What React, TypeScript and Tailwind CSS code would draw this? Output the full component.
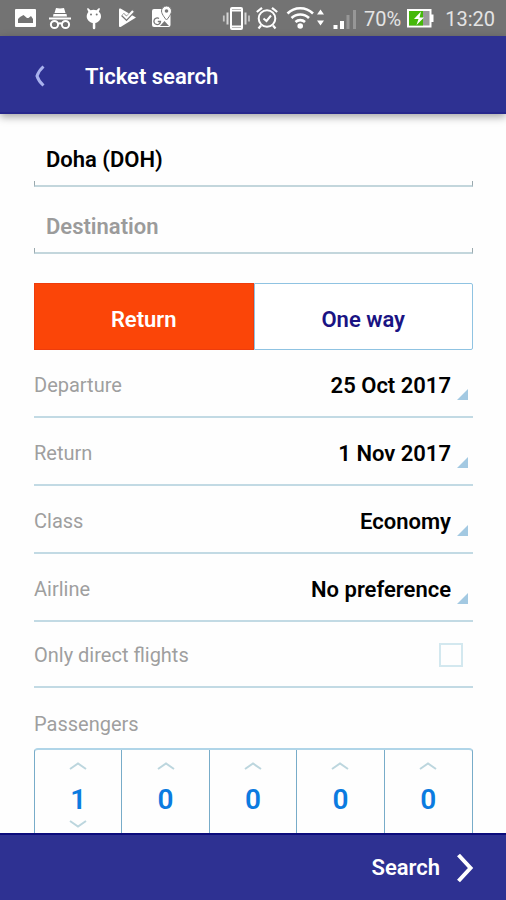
import { useState } from 'react'

// ---------------------------------------------------------------------------
// Status bar icons
// ---------------------------------------------------------------------------

function NotificationIcons() {
  return (
    <div className="flex items-center gap-3" aria-hidden="true">
      {/* Picture */}
      <svg width="22" height="24" viewBox="0 0 22 24">
        <path
          fill="#fff"
          fillRule="evenodd"
          d="M1 3h19a1 1 0 0 1 1 1v16a1 1 0 0 1-1 1H1a1 1 0 0 1-1-1V4a1 1 0 0 1 1-1Zm2 14h15v-4l-2-3-2.500 2-1.500 0-3.500-3L5 11l-2 2Z"
        />
      </svg>
      {/* Incognito */}
      <svg width="22" height="24" viewBox="0 0 22 24">
        <path fill="#fff" d="M7 2 11 2.500l4-.5L16.500 7h-11ZM4.500 8h13l.5 2.500H4Z" />
        <path fill="#fff" d="M0 11.500h22v2H0Z" />
        <g fill="none" stroke="#fff" strokeWidth="2">
          <circle cx="5.500" cy="18.500" r="3.600" />
          <circle cx="16.500" cy="18.500" r="3.600" />
          <path d="M9 18q2-1.500 4 0" />
        </g>
      </svg>
      {/* Android head */}
      <svg width="22" height="24" viewBox="0 0 22 24">
        <path
          fill="#fff"
          d="M5 2l2.500 2.300a8 8 0 0 1 6 0L16 2l1 .8-1.200 3C17.300 7 18 8.500 18 10.500c0 3.300-2.800 6-5.700 6.500V22a1.200 1.200 0 0 1-2.500 0v-5C6.500 16.500 3.700 13.800 3.700 10.500 3.700 8.500 4.500 7 5.400 6L4 2.800Z"
        />
        <circle cx="8" cy="8.500" r="1" fill="#777" />
        <circle cx="13.700" cy="8.500" r="1" fill="#777" />
      </svg>
      {/* Play with tick */}
      <svg width="22" height="24" viewBox="0 0 22 24">
        <path fill="#fff" d="M2 3.500Q2 2 3.500 2.600L19 11.500 4 20.700Q2 21.500 2 20Z" />
        <path d="m5.500 8.500 4 4 8-8.500" fill="none" stroke="#777" strokeWidth="4" />
        <path d="m6 8.500 3.500 3.500 6.500-7" fill="none" stroke="#fff" strokeWidth="2.200" />
      </svg>
      {/* Map with pin */}
      <svg width="22" height="24" viewBox="0 0 22 24">
        <rect x="1" y="3" width="18.500" height="18" rx="2" fill="#fff" />
        <path d="m9 20 4.500-5 4.500 5Z" fill="#777" />
        <path d="M8 12.500a3.300 3.300 0 1 0 1.500 3H6.800" fill="none" stroke="#777" strokeWidth="1.300" />
        <path
          d="M15.500 0a5 5 0 0 1 5 5c0 3.500-5 9-5 9s-5-5.500-5-9a5 5 0 0 1 5-5Z"
          fill="#fff"
          stroke="#777"
        />
        <circle cx="15.500" cy="5" r="1.800" fill="#777" />
      </svg>
    </div>
  )
}

function VibrateIcon() {
  return (
    <svg width="28" height="24" viewBox="0 0 28 24" aria-hidden="true">
      <rect x="9" y="2" width="11" height="21" rx="1" fill="none" stroke="#fff" strokeWidth="2" />
      <path d="M9 4.500h11M9 20.500h11" stroke="#fff" strokeWidth="2" />
      <path d="M5.500 6.500v12M23.500 6.500v12" stroke="#d6d6d6" strokeWidth="2" />
      <path d="M1.800 9.500v6M27 9.500v6" stroke="#c4c4c4" strokeWidth="1.800" />
    </svg>
  )
}

function AlarmIcon() {
  return (
    <svg width="22" height="24" viewBox="0 0 22 24" aria-hidden="true" fill="none" stroke="#fff">
      <circle cx="11" cy="12.500" r="8.300" strokeWidth="2" />
      <path d="m7.500 12.500 3 2.500 4.500-5.500" strokeWidth="2" />
      <path d="M.8 6 6 1.800M16 1.800 21.200 6M5 19.500l-2.500 3M17 19.500l2.500 3" strokeWidth="2.200" />
    </svg>
  )
}

function WifiIcon() {
  return (
    <svg width="42" height="24" viewBox="0 0 42 24" aria-hidden="true">
      <g fill="none" stroke="#fff" strokeWidth="2.600">
        <path d="M3.500 7.500a18 18 0 0 1 25.500 0" />
        <path d="M7.500 12a12.500 12.500 0 0 1 17.500 0" />
        <path d="M11.500 16a7 7 0 0 1 9.500 0" />
      </g>
      <circle cx="16.200" cy="20" r="2.800" fill="#fff" />
      <path fill="#fff" d="M36.500 3.500 40 8.500h-7ZM33 14.500h7l-3.500 5Z" />
    </svg>
  )
}

function SignalIcon() {
  return (
    <svg width="26" height="24" viewBox="0 0 26 24" aria-hidden="true">
      <rect x="1.500" y="19" width="4" height="4" fill="#fff" />
      <rect x="8" y="15" width="4" height="8" fill="#fff" />
      <rect x="14.500" y="9" width="3" height="14" fill="#979797" />
      <rect x="21" y="4" width="3" height="19" fill="#979797" />
    </svg>
  )
}

function BatteryIcon() {
  return (
    <svg width="28" height="24" viewBox="0 0 28 24" aria-hidden="true">
      <rect x="1" y="4" width="22.500" height="16.500" fill="#9a9a9a" stroke="#fff" strokeWidth="2" />
      <rect x="24" y="8.500" width="2.500" height="7.500" fill="#fff" />
      <rect x="2" y="5" width="14" height="14.500" fill="#45b80a" />
      <path d="M14 5.500 7 13h4.500l-2 6 7.500-7.500h-4.500Z" fill="#fff" />
    </svg>
  )
}

function StatusBar() {
  return (
    <div className="flex h-9 shrink-0 items-center justify-between bg-[#737373] pl-[15px] pr-[11px] text-xl text-[#e4e4e4]">
      <NotificationIcons />
      <div className="flex items-center gap-1.5">
        <VibrateIcon />
        <AlarmIcon />
        <WifiIcon />
        <SignalIcon />
        <span className="pt-0.5">70%</span>
        <BatteryIcon />
        <span className="ml-1 pt-0.5">13:20</span>
      </div>
    </div>
  )
}

// ---------------------------------------------------------------------------
// Form fields
// ---------------------------------------------------------------------------

interface AirportFieldProps {
  label: string
  defaultValue?: string
}

function AirportField({ label, defaultValue }: AirportFieldProps) {
  return (
    <div className="flex h-[67px] flex-col justify-end">
      <input
        type="text"
        aria-label={label}
        placeholder={label}
        defaultValue={defaultValue}
        className="h-11 w-full bg-transparent px-3 text-[22px] font-semibold text-black outline-none placeholder:text-[#9b9b9b]"
      />
      <div className="h-1.5 border-x border-b-2 border-x-[#9aa9ae] border-b-[#c3d6dc]" />
    </div>
  )
}

interface SelectRowProps {
  id: string
  label: string
  options: string[]
}

function SelectRow({ id, label, options }: SelectRowProps) {
  return (
    <div className="flex h-[68px] items-center border-b-2 border-[#c2dae4] pr-[5px] pt-1">
      <label htmlFor={id} className="text-xl text-[#9f9f9f]">
        {label}
      </label>
      <select
        id={id}
        className="min-w-0 flex-1 appearance-none bg-transparent text-right text-[22px] font-semibold text-black outline-none [text-align-last:right]"
      >
        {options.map((option) => (
          <option key={option}>{option}</option>
        ))}
      </select>
      <svg width="11" height="11" viewBox="0 0 11 11" className="mb-4 ml-1.5 self-end" aria-hidden="true">
        <path d="M11 0v11H0Z" fill="#a3c9e2" />
      </svg>
    </div>
  )
}

const ROWS: SelectRowProps[] = [
  { id: 'departure', label: 'Departure', options: ['25 Oct 2017'] },
  { id: 'return', label: 'Return', options: ['1 Nov 2017'] },
  { id: 'class', label: 'Class', options: ['Economy'] },
  { id: 'airline', label: 'Airline', options: ['No preference'] },
]

// ---------------------------------------------------------------------------
// Passenger counters
// ---------------------------------------------------------------------------

const PASSENGER_TYPES = ['Adults', 'Youths', 'Children', 'Infants', 'Seniors']

interface CounterProps {
  label: string
  value: number
  onChange: (value: number) => void
}

function Counter({ label, value, onChange }: CounterProps) {
  return (
    <div className="flex flex-col items-center" role="group" aria-label={label}>
      <button
        type="button"
        aria-label={`More ${label}`}
        onClick={() => onChange(value + 1)}
        className="flex h-8 w-full items-center justify-center"
      >
        <svg width="18" height="8" viewBox="0 0 18 8" fill="none" stroke="#bcd6de" strokeWidth="2">
          <path d="m1 7 8-5.500L17 7" />
        </svg>
      </button>
      <output className="h-9 text-[28px] leading-9 font-semibold text-[#0b7be0]">{value}</output>
      {value > 0 && (
        <button
          type="button"
          aria-label={`Fewer ${label}`}
          onClick={() => onChange(value - 1)}
          className="flex h-3 w-full items-center justify-center"
        >
          <svg width="18" height="8" viewBox="0 0 18 8" fill="none" stroke="#bcd6de" strokeWidth="2">
            <path d="m1 1 8 5.500L17 1" />
          </svg>
        </button>
      )}
    </div>
  )
}

// ---------------------------------------------------------------------------
// Page
// ---------------------------------------------------------------------------

export default function App() {
  const [trip, setTrip] = useState<'return' | 'oneway'>('return')
  const [counts, setCounts] = useState([1, 0, 0, 0, 0])

  const active = 'border-[#ee3c0c] bg-[#fb4508] text-white'
  const inactive = 'border-[#8fc3e2] bg-white text-[#1a1383]'

  return (
    <div className="flex h-screen flex-col bg-[#fefefe] font-[Roboto,sans-serif]">
      <StatusBar />

      <header className="z-10 flex h-[78px] shrink-0 items-center border-b-2 border-[#27278c] bg-[#2e3192] pt-1 pl-[34px] shadow-[0_3px_8px_rgba(0,0,0,0.35)]">
        <button type="button" aria-label="Back" className="mr-10">
          <svg width="11" height="22" viewBox="0 0 11 22" fill="none" stroke="#a9b2ee" strokeWidth="3">
            <path d="M9.500 1.500Q4.500 6 3 11q1.500 5 6.500 9.500" />
          </svg>
        </button>
        <h1 className="text-[22px] font-semibold text-white">Ticket search</h1>
      </header>

      <main className="min-h-0 flex-1 overflow-y-auto pt-1.5 pr-[33px] pl-[34px] [scrollbar-width:none]">
        <AirportField label="Origin" defaultValue="Doha (DOH)" />
        <AirportField label="Destination" />

        <div className="mt-[29px] grid h-[67px] grid-cols-2 text-[22px] font-semibold">
          <button
            type="button"
            aria-pressed={trip === 'return'}
            onClick={() => setTrip('return')}
            className={`border pt-1.5 ${trip === 'return' ? active : inactive}`}
          >
            Return
          </button>
          <button
            type="button"
            aria-pressed={trip === 'oneway'}
            onClick={() => setTrip('oneway')}
            className={`rounded-r-xs border pt-1.5 ${trip === 'oneway' ? active : inactive}`}
          >
            One way
          </button>
        </div>

        {ROWS.map((row) => (
          <SelectRow key={row.id} {...row} />
        ))}

        <div className="flex h-[66px] items-center justify-between border-b-2 border-[#c2dae4] pr-2.5 pt-0.5">
          <label htmlFor="direct" className="text-xl text-[#9f9f9f]">
            Only direct flights
          </label>
          <input
            id="direct"
            type="checkbox"
            className="size-6 appearance-none border-2 border-[#d3e8ef] checked:bg-[#a3c9e2]"
          />
        </div>

        <h2 className="mt-6 mb-3 text-xl leading-6 text-[#9f9f9f]">Passengers</h2>
        <div className="grid h-28 grid-cols-5 divide-x divide-[#78acc9] rounded-sm border border-t-2 border-[#78acc9] border-t-[#b0d5e8]">
          {PASSENGER_TYPES.map((label, i) => (
            <Counter
              key={label}
              label={label}
              value={counts[i]}
              onChange={(value) => setCounts(counts.map((c, j) => (j === i ? value : c)))}
            />
          ))}
        </div>
      </main>

      <footer className="flex h-[67px] shrink-0 items-center justify-end border-t-2 border-[#0c0c7c] bg-[#2e3192] pr-8">
        <button type="button" className="flex items-center gap-4 text-[22px] font-semibold text-white">
          Search
          <svg width="18" height="30" viewBox="0 0 18 30" fill="none" stroke="#fff" strokeWidth="4">
            <path d="m2.500 2 12 13-12 13" />
          </svg>
        </button>
      </footer>
    </div>
  )
}
